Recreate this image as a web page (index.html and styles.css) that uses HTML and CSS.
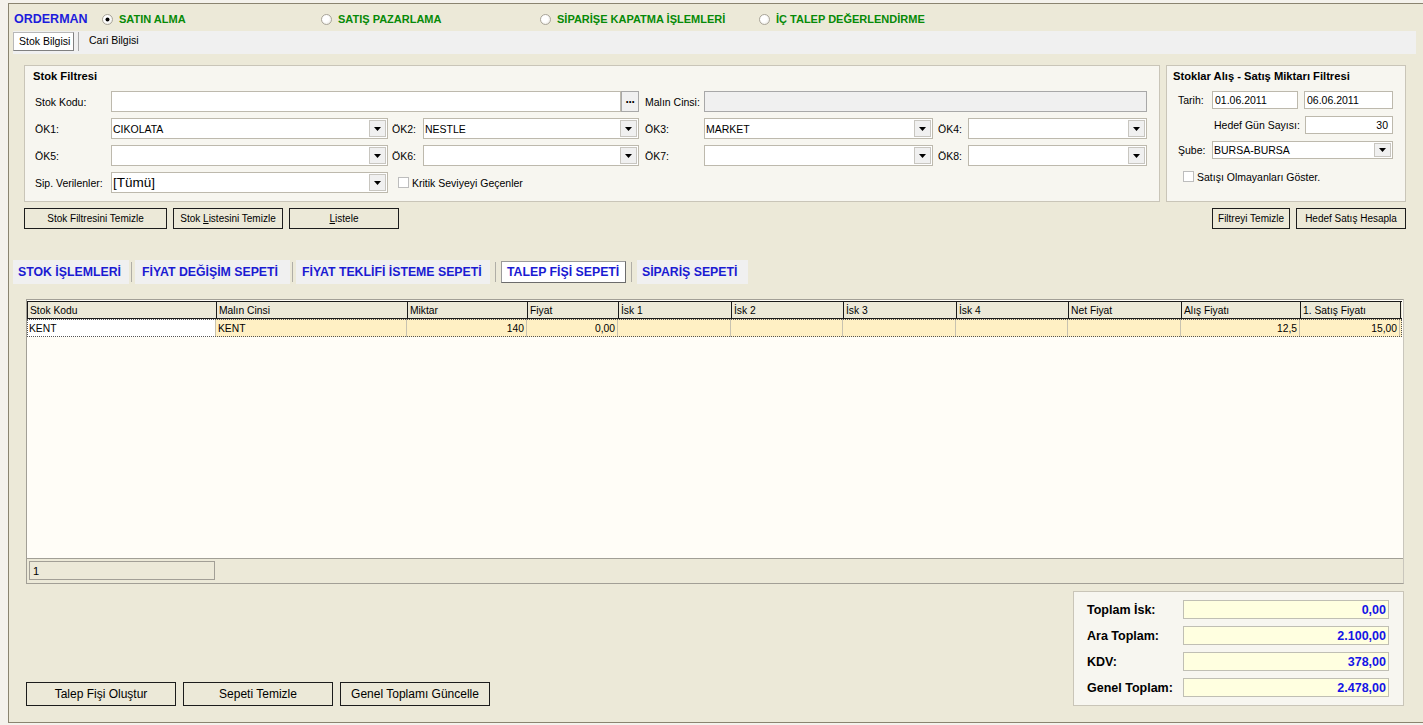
FILE: index.html
```html
<!DOCTYPE html>
<html lang="tr">
<head>
<meta charset="utf-8">
<title>ORDERMAN</title>
<link rel="stylesheet" href="styles.css">
</head>
<body>
<div class="screen">
  <div class="frame">
    <div class="toprow">
      <div class="brand">ORDERMAN</div>
      <div class="opt"><span class="radio checked"></span><span class="opt-text">SATIN ALMA</span></div>
      <div class="opt"><span class="radio"></span><span class="opt-text">SATIŞ PAZARLAMA</span></div>
      <div class="opt opt3"><span class="radio"></span><span class="opt-text">SİPARİŞE KAPATMA İŞLEMLERİ</span></div>
      <div class="opt"><span class="radio"></span><span class="opt-text">İÇ TALEP DEĞERLENDİRME</span></div>
    </div>

    <div class="tabstrip">
      <div class="ptab active">Stok Bilgisi</div>
      <div class="psep"></div>
      <div class="ptab">Cari Bilgisi</div>
    </div>

    <div class="groups">
      <div class="group left-group">
        <div class="gtitle">Stok Filtresi</div>
        <div class="fgrid">
          <div class="lbl">Stok Kodu:</div>
          <div class="span-1">
            <div class="input grow"></div>
            <div class="dots">···</div>
          </div>
          <div class="lbl l3">Malın Cinsi:</div>
          <div class="input disabled span-2"></div>

          <div class="lbl">ÖK1:</div>
          <div class="combo"><div class="val">CIKOLATA</div><div class="dd"><svg width="7" height="4" viewBox="0 0 7 4"><path d="M0 0H7L3.5 4Z" fill="#000"/></svg></div></div>
          <div class="lbl l2">ÖK2:</div>
          <div class="combo"><div class="val">NESTLE</div><div class="dd"><svg width="7" height="4" viewBox="0 0 7 4"><path d="M0 0H7L3.5 4Z" fill="#000"/></svg></div></div>
          <div class="lbl l3">ÖK3:</div>
          <div class="combo"><div class="val">MARKET</div><div class="dd"><svg width="7" height="4" viewBox="0 0 7 4"><path d="M0 0H7L3.5 4Z" fill="#000"/></svg></div></div>
          <div class="lbl l4">ÖK4:</div>
          <div class="combo"><div class="val"></div><div class="dd"><svg width="7" height="4" viewBox="0 0 7 4"><path d="M0 0H7L3.5 4Z" fill="#000"/></svg></div></div>

          <div class="lbl">ÖK5:</div>
          <div class="combo"><div class="val"></div><div class="dd"><svg width="7" height="4" viewBox="0 0 7 4"><path d="M0 0H7L3.5 4Z" fill="#000"/></svg></div></div>
          <div class="lbl l2">ÖK6:</div>
          <div class="combo"><div class="val"></div><div class="dd"><svg width="7" height="4" viewBox="0 0 7 4"><path d="M0 0H7L3.5 4Z" fill="#000"/></svg></div></div>
          <div class="lbl l3">ÖK7:</div>
          <div class="combo"><div class="val"></div><div class="dd"><svg width="7" height="4" viewBox="0 0 7 4"><path d="M0 0H7L3.5 4Z" fill="#000"/></svg></div></div>
          <div class="lbl l4">ÖK8:</div>
          <div class="combo"><div class="val"></div><div class="dd"><svg width="7" height="4" viewBox="0 0 7 4"><path d="M0 0H7L3.5 4Z" fill="#000"/></svg></div></div>

          <div class="lbl">Sip. Verilenler:</div>
          <div class="combo"><div class="val big">[Tümü]</div><div class="dd"><svg width="7" height="4" viewBox="0 0 7 4"><path d="M0 0H7L3.5 4Z" fill="#000"/></svg></div></div>
          <div class="chkline span-3"><span class="chk"></span><span>Kritik Seviyeyi Geçenler</span></div>
        </div>
      </div>

      <div class="group right-group">
        <div class="gtitle">Stoklar Alış - Satış Miktarı Filtresi</div>
        <div class="rrow r1">
          <div class="rlbl">Tarih:</div>
          <div class="input date1">01.06.2011</div>
          <div class="input date2">06.06.2011</div>
        </div>
        <div class="rrow r2">
          <div class="rlbl2">Hedef Gün Sayısı:</div>
          <div class="input num">30</div>
        </div>
        <div class="rrow r3">
          <div class="rlbl">Şube:</div>
          <div class="combo sube"><div class="val">BURSA-BURSA</div><div class="dd"><svg width="7" height="4" viewBox="0 0 7 4"><path d="M0 0H7L3.5 4Z" fill="#000"/></svg></div></div>
        </div>
        <div class="rrow r4">
          <span class="chk"></span><span>Satışı Olmayanları Göster.</span>
        </div>
      </div>
    </div>

    <div class="btnrow">
      <div class="btns-left">
        <div class="btn b1"><span>Stok Filtresini Temizle</span></div>
        <div class="btn b2"><span>Stok <u>L</u>istesini Temizle</span></div>
        <div class="btn b3"><span><u>L</u>istele</span></div>
      </div>
      <div class="btns-right">
        <div class="btn b4"><span>Filtreyi Temizle</span></div>
        <div class="btn b5"><span>Hedef Satış Hesapla</span></div>
      </div>
    </div>

    <div class="tabs">
      <div class="tab t1">STOK İŞLEMLERİ</div>
      <div class="tsep"></div>
      <div class="tab t2">FİYAT DEĞİŞİM SEPETİ</div>
      <div class="tsep"></div>
      <div class="tab t3">FİYAT TEKLİFİ İSTEME SEPETİ</div>
      <div class="tsep wide"></div>
      <div class="tab t4 active">TALEP FİŞİ SEPETİ</div>
      <div class="tsep wide"></div>
      <div class="tab t5">SİPARİŞ SEPETİ</div>
    </div>

    <div class="grid">
      <div class="ghead">
        <div class="gc c1">Stok Kodu</div>
        <div class="gc c2">Malın Cinsi</div>
        <div class="gc c3">Miktar</div>
        <div class="gc c4">Fiyat</div>
        <div class="gc c5">İsk 1</div>
        <div class="gc c6">İsk 2</div>
        <div class="gc c7">İsk 3</div>
        <div class="gc c8">İsk 4</div>
        <div class="gc c9">Net Fiyat</div>
        <div class="gc c10">Alış Fiyatı</div>
        <div class="gc c11">1. Satış Fiyatı</div>
      </div>
      <div class="gbody">
        <div class="grow-data">
          <div class="gd c1 first">KENT</div>
          <div class="gd c2">KENT</div>
          <div class="gd c3 r">140</div>
          <div class="gd c4 r">0,00</div>
          <div class="gd c5"></div>
          <div class="gd c6"></div>
          <div class="gd c7"></div>
          <div class="gd c8"></div>
          <div class="gd c9"></div>
          <div class="gd c10 r">12,5</div>
          <div class="gd c11 r">15,00</div>
        </div>
      </div>
      <div class="gfoot">
        <div class="fcell">1</div>
      </div>
    </div>

    <div class="bottom">
      <div class="bbtns">
        <div class="bbtn">Talep Fişi Oluştur</div>
        <div class="bbtn">Sepeti Temizle</div>
        <div class="bbtn">Genel Toplamı Güncelle</div>
      </div>
      <div class="totals">
        <div class="trow"><div class="tlbl">Toplam İsk:</div><div class="tval">0,00</div></div>
        <div class="trow"><div class="tlbl">Ara Toplam:</div><div class="tval">2.100,00</div></div>
        <div class="trow"><div class="tlbl">KDV:</div><div class="tval">378,00</div></div>
        <div class="trow"><div class="tlbl">Genel Toplam:</div><div class="tval">2.478,00</div></div>
      </div>
    </div>
  </div>
</div>
</body>
</html>
```

FILE: styles.css
```css
* { box-sizing: border-box; }
html, body { margin: 0; padding: 0; }
body {
  font-family: "Liberation Sans", Arial, sans-serif;
  font-size: 10.5px;
  color: #000;
  background: #f4f2ec;
}
.screen {
  width: 1423px;
  height: 725px;
  padding: 3px 0 0 8px;
  background: #f4f2ec;
  overflow: hidden;
}
.frame {
  height: 720px;
  background: #ece9d8;
  border-top: 1px solid #8a8470;
  border-left: 1px solid #8a8470;
  border-bottom: 1px solid #8a8470;
  display: flex;
  flex-direction: column;
}

/* top row */
.toprow {
  margin-top: 6px;
  height: 18px;
  padding-left: 5px;
  display: flex;
  align-items: center;
  font-weight: bold;
  font-size: 11px;
}
.brand { width: 88px; color: #1c1cdc; font-size: 12.5px; }
.opt { width: 219px; display: flex; align-items: center; color: #078a07; }
.opt-text { margin-left: 6px; }
.radio {
  width: 11px; height: 11px; border-radius: 50%;
  border: 1px solid #a9a59a;
  background: radial-gradient(circle at 40% 40%, #ffffff 40%, #e4e2da 100%);
  position: relative;
  flex: none;
}
.radio.checked::after {
  content: ""; position: absolute; left: 3px; top: 3px;
  width: 3px; height: 3px; border-radius: 50%; background: #000;
  box-shadow: 0 0 0 0.5px #000;
}

/* page tab strip */
.tabstrip {
  margin: 3px 7px 0 4px;
  height: 23px;
  background: #f0f0f0;
  display: flex;
  align-items: flex-start;
  padding-top: 1px;
}
.ptab { height: 19px; line-height: 17px; padding: 0 5px; white-space: nowrap; }
.ptab.active {
  background: #fff;
  border: 1px solid #b8b8b8;
  border-right-color: #808080;
  border-bottom-color: #808080;
  width: 61px;
  padding: 0 0 0 5px;
}
.psep { width: 1px; height: 19px; background: #a8a8a8; margin: 0 5px 0 4px; }

/* groups */
.groups {
  margin-top: 11px;
  padding-left: 15px;
  display: flex;
  gap: 6px;
}
.group {
  height: 137px;
  background: #f7f6f0;
  border: 1px solid #c9c5b8;
}
.left-group { width: 1136px; padding: 3px 0 0 10px; }
.right-group { width: 240px; padding: 3px 0 0 8px; }
.gtitle { height: 14px; line-height: 14px; font-weight: bold; font-size: 11.2px; margin-left: -2px; }
.fgrid {
  margin-top: 8px;
  display: grid;
  grid-template-columns: 76px 277px 35px 216px 65px 229px 35px 179px;
  grid-auto-rows: 21px;
  row-gap: 6px;
}
.lbl { display: flex; align-items: center; }
.l2 { padding-left: 4px; }
.l3 { padding-left: 6px; }
.l4 { padding-left: 5px; }
.span-1 { grid-column: 2 / 5; display: flex; }
.span-2 { grid-column: 6 / 9; }
.span-3 { grid-column: 3 / 7; }
.input {
  background: #fff;
  border: 1px solid #bdb9ad;
  height: 21px;
  display: flex;
  align-items: center;
  padding-left: 2px;
}
.input.grow { flex: 1; }
.input.disabled { background: #f0f0f0; border-color: #a8a8a8; }
.dots {
  width: 18px; height: 21px;
  background: #f0f0f0;
  border: 1px solid #a8a8a8;
  display: flex; align-items: center; justify-content: center;
  font-weight: bold; font-size: 12px; letter-spacing: -1px;
}
.combo {
  display: flex;
  background: #fff;
  border: 1px solid #bdb9ad;
  height: 21px;
}
.combo .val { flex: 1; display: flex; align-items: center; padding-left: 1px; overflow: hidden; white-space: nowrap; }
.combo .val.big { font-size: 13.5px; }
.combo .dd {
  width: 17px;
  margin: 1px 1px 1px 0;
  background: #f0f0f0;
  border: 1px solid #c8c6c0;
  display: flex; align-items: center; justify-content: center;
}
.chkline { display: flex; align-items: center; padding-left: 10px; gap: 3px; }
.chk { width: 11px; height: 11px; background: #fff; border: 1px solid #bdbdbd; flex: none; }

/* right group */
.rrow { display: flex; align-items: center; }
.r1 { margin-top: 8px; height: 18px; }
.r2 { margin-top: 7px; height: 18px; }
.r3 { margin-top: 7px; height: 18px; }
.r4 { margin-top: 12px; height: 11px; padding-left: 8px; gap: 3px; }
.rlbl { width: 37px; padding-left: 3px; }
.rlbl2 { width: 93px; margin-left: 37px; padding-left: 2px; }
.rrow .input { height: 18px; }
.date1 { width: 86px; }
.date2 { width: 89px; margin-left: 6px; }
.num { width: 88px; justify-content: flex-end; padding-right: 4px; }
.combo.sube { width: 181px; height: 18px; }
.combo.sube .dd { width: 17px; }

/* buttons row */
.btnrow {
  margin-top: 6px;
  height: 21px;
  display: flex;
  justify-content: space-between;
  padding-left: 15px;
  padding-right: 17px;
}
.btns-left, .btns-right { display: flex; gap: 6px; }
.btn {
  height: 21px;
  border: 1px solid #1c1c1c;
  background: #ece9d8;
  display: flex; align-items: center; justify-content: center;
  font-size: 10px;
  white-space: nowrap;
}
.btn u { text-decoration: underline; }
.b1 { width: 143px; }
.b2 { width: 110px; }
.b3 { width: 110px; }
.b4 { width: 78px; }
.b5 { width: 110px; }

/* tabs */
.tabs {
  margin-top: 31px;
  margin-left: 4px;
  height: 24px;
  display: flex;
  align-items: stretch;
  font-weight: bold;
  font-size: 12.3px;
  color: #1a1ad2;
}
.tab {
  background: #f0f0f0;
  padding: 0 0 0 5px;
  display: flex; align-items: center;
  white-space: nowrap;
}
.t1 { width: 116px; }
.t2 { width: 155px; padding-left: 7px; }
.t3 { width: 194px; padding-left: 6px; }
.t4 { width: 125px; }
.t5 { width: 111px; }
.tab.active {
  background: #fff;
  border: 1px solid #9a9a9a;
  border-right-color: #6c6c6c;
  border-bottom-color: #6c6c6c;
  margin-top: 1px;
  margin-bottom: 1px;
}
.tsep { width: 1px; background: #b0aea6; margin: 2px 3px 2px 2px; }
.tsep.wide { margin: 2px 5px; }

/* grid */
.grid {
  margin-top: 15px;
  margin-left: 17px;
  width: 1378px;
  height: 285px;
  border: 1px solid #a29f96;
  border-right-color: #c9c6bc;
  background: #fffdf7;
  display: flex;
  flex-direction: column;
  padding-top: 1px;
}
.ghead {
  display: flex;
  height: 18px;
  border-top: 1px solid #1a1a1a;
  border-bottom: 1px solid #1a1a1a;
  background: #ece9d8;
  width: 1375px;
  border-left: 1px solid #1a1a1a;
}
.gc {
  border-right: 1px solid #1a1a1a;
  padding-left: 2px;
  display: flex; align-items: center;
  font-size: 10.3px;
  white-space: nowrap;
  overflow: hidden;
}
.c1 { width: 189px; }
.c2 { width: 191px; }
.c3 { width: 120px; }
.c4 { width: 91px; }
.c5 { width: 113px; }
.c6 { width: 112px; }
.c7 { width: 113px; }
.c8 { width: 112px; }
.c9 { width: 113px; }
.c10 { width: 119px; }
.c11 { width: 100px; }
.gbody { flex: 1; background: #fffdf7; }
.grow-data {
  display: flex;
  height: 18px;
  width: 1375px;
  background: #fff0c4;
  outline: 1px dotted #555;
  outline-offset: -1px;
}
.gd {
  border-right: 1px solid #c8c2b0;
  padding: 0 2px;
  display: flex; align-items: center;
  font-size: 10.3px;
  white-space: nowrap;
}
.gd.first { background: #fff; }
.gd.r { justify-content: flex-end; }
.gfoot {
  height: 25px;
  background: #ece9d8;
  border-top: 1px solid #a29f96;
  padding: 2px 0 0 2px;
}
.fcell {
  width: 186px;
  height: 19px;
  border: 1px solid #a29f96;
  padding-left: 3px;
  display: flex; align-items: center;
  font-size: 11px;
}

/* bottom */
.bottom {
  margin-top: 7px;
  height: 115px;
  display: flex;
  justify-content: space-between;
  align-items: flex-end;
  padding-left: 17px;
  padding-right: 19px;
}
.bbtns { display: flex; gap: 7px; }
.bbtn {
  width: 150px;
  height: 24px;
  border: 1px solid #1c1c1c;
  background: #ece9d8;
  display: flex; align-items: center; justify-content: center;
  font-size: 12px;
}
.totals {
  width: 331px;
  height: 115px;
  background: #f7f6f0;
  border: 1px solid #c9c5b8;
  padding: 8px 0 0 13px;
  display: flex;
  flex-direction: column;
  gap: 7px;
}
.trow { display: flex; align-items: center; height: 19px; }
.tlbl { width: 96px; font-weight: bold; font-size: 12.5px; }
.tval {
  width: 206px;
  height: 19px;
  background: #ffffe0;
  border: 1px solid #c0bfb4;
  display: flex; align-items: center; justify-content: flex-end;
  padding-right: 2px;
  font-weight: bold;
  font-size: 12.5px;
  color: #1414e6;
}
```
